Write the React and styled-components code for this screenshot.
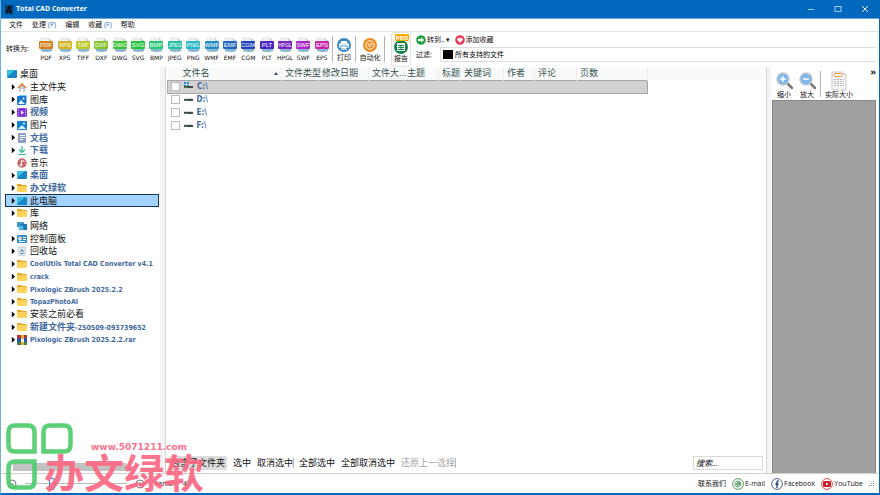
import React from "react";
import styled, { createGlobalStyle } from "styled-components";

const GlobalStyle = createGlobalStyle`
  * {
    box-sizing: border-box;
  }
  body {
    margin: 0;
    font-family: "Open Sans", "Noto Sans CJK SC", sans-serif;
    font-size: 7px;
    line-height: 10px;
    color: #111;
  }
  button,
  input {
    font: inherit;
    color: inherit;
  }
`;

const Window = styled.div`
  position: relative;
  display: flex;
  flex-direction: column;
  height: 100vh;
  overflow: hidden;
  background: #fff;
  border: solid #0067b9;
  border-width: 0 1px 2px;
  border-left-color: #6fb1e3;
`;

const TitleBar = styled.header`
  display: flex;
  align-items: center;
  gap: 3px;
  flex: none;
  height: 19px;
  padding: 0 8px 0 4px;
  background: #0069bd;
  border-bottom: 1px solid #68a9dc;
  color: #fff;
`;

const Title = styled.h1`
  flex: 1;
  margin: 0;
  font-size: 7px;
  font-weight: 700;
`;

const WindowButton = styled.button`
  display: flex;
  width: 10px;
  margin-left: 14px;
  padding: 0;
  border: 0;
  background: none;
`;

const MenuBar = styled.nav`
  display: flex;
  align-items: center;
  gap: 9px;
  flex: none;
  height: 13px;
  padding-left: 8px;
  border-bottom: 1px solid #e4e4e4;
`;

const PlainButton = styled.button`
  flex: none;
  padding: 0;
  border: 0;
  background: none;
  white-space: nowrap;
  color: ${(props) => (props.$muted ? "#a3a3a3" : "inherit")};
`;

const Accel = styled.span`
  color: #3472a8;
`;

const Toolbar = styled.div`
  display: flex;
  flex: none;
  height: 35px;
`;

const ConvertLabel = styled.span`
  flex: none;
  width: 36px;
  padding: 12px 0 0 5px;
  white-space: nowrap;
`;

const Formats = styled.div`
  display: grid;
  grid-template-columns: repeat(16, 1fr);
  flex: none;
  width: 294px;
`;

const ToolButton = styled.button`
  display: flex;
  flex-direction: column;
  align-items: center;
  flex: none;
  width: ${(props) => props.$width || "auto"};
  padding: ${(props) => (props.$framed ? "2px" : "5px")} 0 0;
  border: ${(props) => (props.$framed ? "1px solid #e2e2e2" : "0")};
  border-radius: 3px;
  background: none;
  white-space: nowrap;

  svg {
    flex: none;
    overflow: visible;
  }
`;

const FormatButton = styled(ToolButton)`
  font-family: "DejaVu Sans", sans-serif;
  font-size: 6px;
`;

const Divider = styled.span`
  flex: none;
  width: 1px;
  height: ${(props) => props.$height || "26px"};
  margin: ${(props) => props.$margin || "4px 0 0"};
  background: #b5b5b5;
`;

const ToolbarRight = styled.div`
  display: flex;
  flex-direction: column;
  flex: 1;
  padding: 0 3px 0 5px;
`;

const QuickRow = styled.div`
  display: flex;
  align-items: center;
  gap: 4px;
  height: 15px;
`;

const IconButton = styled(PlainButton)`
  display: flex;
  align-items: center;
  gap: 1px;
`;

const FilterRow = styled.label`
  display: flex;
  align-items: center;
  height: 15px;
`;

const FilterLabel = styled.span`
  width: 24px;
`;

const FilterBox = styled.span`
  display: flex;
  align-items: center;
  gap: 2px;
  flex: 1;
  height: 15px;
  padding-left: 2px;
  border: 1px solid #dedede;
  border-right: 0;
`;

const Swatch = styled.span`
  width: 10px;
  height: 9px;
  background: #000;
`;

const FilterSelect = styled.select`
  flex: 1;
  padding: 0;
  border: 0;
  background: none;
  appearance: none;
  font: inherit;
`;

const Main = styled.main`
  display: flex;
  flex: 1;
  min-height: 0;
  border-bottom: 1px solid #cfcfcf;
`;

const Sidebar = styled.aside`
  display: flex;
  flex-direction: column;
  justify-content: space-between;
  flex: none;
  width: 158px;
`;

const Tree = styled.ul`
  display: flex;
  flex-direction: column;
  height: 278px;
  margin: 1px 0 0;
  padding: 0 0 0 4px;
  list-style: none;
`;

const TreeRow = styled.li`
  display: flex;
  align-items: center;
  gap: 3px;
  flex: 1;
  min-height: 0;
  padding-left: ${(props) => (props.$root ? "2px" : "6px")};
  white-space: nowrap;
  font-size: 9px;
  font-weight: ${(props) => (props.$link ? 600 : 400)};
  color: ${(props) => (props.$link ? "#41699f" : "#111")};
  background: ${(props) => (props.$selected ? "#a3d4ff" : "none")};
  outline: ${(props) => (props.$selected ? "1px solid #16364f" : "none")};
  outline-offset: -1px;

  svg {
    flex: none;
  }
`;

const Arrow = styled.span`
  width: 4px;
  height: 6px;
  margin-right: -1px;
  clip-path: polygon(20% 0, 100% 50%, 20% 100%);
  background: ${(props) => (props.$open ? "#000" : "transparent")};
`;

const Latin = styled.span`
  font-family: "DejaVu Sans Condensed", "DejaVu Sans", sans-serif;
  font-size: ${(props) => (props.$large ? "8px" : "7px")};
  font-weight: 700;
`;

const ScrollTrack = styled.div`
  display: flex;
  align-items: center;
  height: 12px;
  padding: 0 4px 0 8px;
  color: #777;
`;

const ScrollThumb = styled.div`
  width: 113px;
  height: 8px;
  margin: 0 auto 0 2px;
  background: #c2c2c2;
`;

const Splitter = styled.div`
  flex: none;
  width: ${(props) => (props.$thin ? "5px" : "6px")};
  margin: ${(props) => (props.$thin ? "0 1px 0 0" : "0 1px")};
  background: #f3f3f3;
  border: solid #d6d6d6;
  border-width: ${(props) => (props.$thin ? "0 0 0 1px" : "0 1px 0 0")};
`;

const FilePane = styled.section`
  display: flex;
  flex-direction: column;
  flex: 1;
  min-width: 0;
`;

const FileTable = styled.table`
  width: 100%;
  table-layout: fixed;
  border-collapse: collapse;

  th,
  td {
    height: 13px;
    padding: 0 0 0 3px;
    line-height: 12px;
    text-align: left;
    white-space: nowrap;
  }
  th {
    background: #f9fbfb;
    border-right: 1px solid #e9eeee;
    font-size: 9px;
    font-weight: 400;
    color: #35504f;
  }
  th:first-child {
    position: relative;
    padding-left: 15px;
  }
  th:last-child {
    border-right: 0;
  }
`;

const SortMark = styled.span`
  position: absolute;
  top: 5px;
  right: 3px;
  border: solid transparent;
  border-width: 0 2px 3px;
  border-bottom-color: #35478f;
`;

const FileRow = styled.tr`
  td:first-child {
    background: ${(props) => (props.$selected ? "#d2d2d2" : "none")};
    border: ${(props) => (props.$selected ? "1px solid #a6a6a6" : "0")};
  }
`;

const FileLabel = styled.label`
  display: flex;
  align-items: center;
  gap: 4px;
  height: 11px;
  color: #41699f;
`;

const CheckBox = styled.input`
  appearance: none;
  width: 9px;
  height: 9px;
  margin: 0;
  background: #fff;
  border: 1px solid #bcbcbc;
`;

const SelectionBar = styled.div`
  display: flex;
  align-items: center;
  gap: 6px;
  height: 21px;
  margin-top: auto;
  padding: 0 3px 0 2px;
  font-size: 9px;
`;

const ToggleButton = styled(PlainButton)`
  height: 14px;
  padding: 0 2px;
  background: #dcdcdc;
  border-radius: 2px;
`;

const SearchBox = styled.input`
  width: 70px;
  height: 14px;
  margin-left: auto;
  padding: 0 2px;
  border: 1px solid #dadada;
  font-size: 8px;
  font-style: italic;

  &::placeholder {
    color: #111;
  }
`;

const Preview = styled.section`
  display: flex;
  flex-direction: column;
  flex: none;
  width: 107px;
  padding-right: 3px;
`;

const PreviewTools = styled.div`
  display: flex;
  align-items: flex-start;
  height: 33px;
`;

const More = styled(PlainButton)`
  margin: 0 0 0 auto;
  font-size: 9px;
  font-weight: 700;
`;

const PreviewArea = styled.div`
  flex: 1;
  background: #a0a0a0;
  border: 1px solid #858585;
  border-bottom: 0;
`;

const StatusBar = styled.footer`
  display: flex;
  align-items: center;
  flex: none;
  height: 19px;
  padding: 0 4px 0 6px;
`;

const ZoomSlider = styled.input`
  appearance: none;
  width: 102px;
  height: 12px;
  margin: 0 8px;
  background: linear-gradient(#b9b9b9, #b9b9b9) center / 100% 1px no-repeat;

  &::-webkit-slider-thumb {
    appearance: none;
    width: 6px;
    height: 12px;
    background: #e3f1fb;
    border: 1px solid #1f8ad6;
    border-radius: 2px;
  }
`;

const Count = styled.output`
  display: flex;
  gap: 9px;
  margin: 0 auto 0 9px;
`;

const Contacts = styled.div`
  display: flex;
  align-items: center;
  gap: 5px;
`;

const ContactLink = styled.a`
  display: flex;
  align-items: center;
  gap: 1px;
  color: #111;
  text-decoration: none;

  & + & {
    margin-left: 1px;
  }
`;

const Watermark = styled.div`
  position: absolute;
  left: 3px;
  bottom: 1px;
  color: #fb6883;
  opacity: 0.92;
  pointer-events: none;

  svg {
    display: block;
  }
`;

const WatermarkText = styled.div`
  position: absolute;
  left: 40px;
  bottom: -1px;
  display: flex;
  flex-direction: column;
  white-space: nowrap;
  font-size: 40px;
  font-weight: 700;
  line-height: 40px;
`;

const WatermarkSite = styled.span`
  padding-left: 30px;
  align-self: center;
  font-family: "DejaVu Sans", sans-serif;
  font-size: 9px;
  line-height: 12px;
`;

const formats = [
  ["PDF", "#d5811d"],
  ["XPS", "#d3b324"],
  ["TIFF", "#bfc92a"],
  ["DXF", "#83c526"],
  ["DWG", "#3cc432"],
  ["SVG", "#27c53d"],
  ["BMP", "#29c779"],
  ["JPEG", "#27bfa7"],
  ["PNG", "#26b9c6"],
  ["WMF", "#258dc4"],
  ["EMF", "#2367c2"],
  ["CGM", "#223fbe"],
  ["PLT", "#4b26c3"],
  ["HPGL", "#7b25c2"],
  ["SWF", "#aa27c5"],
  ["EPS", "#ca23ae"],
];

const treeItems = [
  { name: "主文件夹", icon: "home" },
  { name: "图库", icon: "gallery" },
  { name: "视频", icon: "video", link: true },
  { name: "图片", icon: "picture" },
  { name: "文档", icon: "document", link: true },
  { name: "下载", icon: "download", link: true },
  { name: "音乐", icon: "music", leaf: true },
  { name: "桌面", icon: "screen", link: true },
  { name: "办文绿软", icon: "folder", link: true },
  { name: "此电脑", icon: "screen", selected: true },
  { name: "库", icon: "folder" },
  { name: "网络", icon: "network", leaf: true },
  { name: "控制面板", icon: "panel" },
  { name: "回收站", icon: "recycle" },
  { latin: "CoolUtils Total CAD Converter v4.1", icon: "folder", link: true },
  { latin: "crack", icon: "folder", link: true },
  { latin: "Pixologic ZBrush 2025.2.2", icon: "folder", link: true },
  { latin: "TopazPhotoAI", icon: "folder", link: true },
  { name: "安装之前必看", icon: "folder" },
  { name: "新建文件夹", latin: "-250509-093739652", icon: "folder", link: true },
  { latin: "Pixologic ZBrush 2025.2.2.rar", icon: "archive", link: true },
];

const columns = [
  ["文件名", 114],
  ["文件类型", 37],
  ["修改日期", 50],
  ["文件大...", 35],
  ["主题", 35],
  ["标题", 22],
  ["关键词", 43],
  ["作者", 31],
  ["评论", 42],
  ["页数", 71],
];

const drives = ["C:\\", "D:\\", "E:\\", "F:\\"];

const treeIcons = {
  home: (
    <>
      <path d="M2 5v5h2V7h2v3h2V5L5 2z" fill="#c3c9ce" />
      <path d="M1 6l4-4 4 4" fill="none" stroke="#e2823a" strokeWidth="1.6" />
    </>
  ),
  gallery: (
    <>
      <rect x="2" width="8" height="8" rx="1" fill="#7cc3ef" />
      <rect y="1" width="9" height="9" rx="1" fill="#1678cd" />
      <path d="M1 9l3-4 4 4z" fill="#e9f6ff" />
      <circle cx="6.500" cy="3.500" r="1" fill="#fff" />
    </>
  ),
  video: (
    <>
      <rect y="1" width="10" height="9" rx="1" fill="#8537d6" />
      <path d="M1.500 1v9M8.500 1v9" stroke="#c49af0" strokeDasharray="1 1" />
      <path d="M4 3.500v4l3-2z" fill="#fff" />
    </>
  ),
  picture: (
    <>
      <rect y="1" width="10" height="9" rx="1" fill="#1481d3" />
      <path d="M1 9l4-4 4 4z" fill="#dff3ff" />
      <circle cx="7" cy="3.500" r="1" fill="#fff" />
    </>
  ),
  document: (
    <>
      <rect x="1" y="0" width="8" height="10" rx="1" fill="#8b9fc4" />
      <path d="M3 2.500h5M3 4.500h5M3 6.500h3" stroke="#fff" />
    </>
  ),
  download: (
    <path d="M5 1v6M2 4.500l3 3 3-3M1 9.500h8" fill="none" stroke="#2eb893" strokeWidth="1.200" />
  ),
  music: (
    <>
      <circle cx="5" cy="5" r="4.700" fill="#cf6668" />
      <path d="M4.500 7V2.500l3 1" fill="none" stroke="#fff" />
      <circle cx="4" cy="7" r="1.200" fill="#fff" />
    </>
  ),
  screen: (
    <>
      <rect y="1" width="10" height="8" rx="1" fill="#1b84c4" />
      <path d="M0 8V2q0-1 1-1h7z" fill="#36bfe0" />
    </>
  ),
  folder: (
    <>
      <path d="M0 2q0-1 1-1h3l1 1h4q1 0 1 1v1H0z" fill="#e9a51f" />
      <rect y="3" width="10" height="6" rx="1" fill="#ffd35c" />
    </>
  ),
  network: (
    <>
      <rect y="1" width="7" height="5" fill="#3d9bd1" />
      <rect x="3" y="3" width="7" height="6" fill="#1f76b5" />
      <circle cx="4" cy="7" r="2.500" fill="#54b5dd" />
    </>
  ),
  panel: (
    <>
      <rect y="1" width="10" height="8" rx="1" fill="#2c8fd6" />
      <circle cx="3" cy="4.500" r="2" fill="#d8effd" />
      <path d="M6 3.500h3M6 5.500h3M2 7.500h6" stroke="#fff" />
      <path d="M3 4.500V2.500a2 2 0 0 1 2 2z" fill="#f3a43a" />
    </>
  ),
  recycle: (
    <>
      <path d="M1 1h8l-1 9H2z" fill="#dfe5e9" stroke="#aab4bb" strokeWidth=".5" />
      <path d="M3.500 6L5 3.500 6.500 6M3.500 7.500h3" fill="none" stroke="#3b87c9" />
    </>
  ),
  archive: (
    <>
      <rect width="10" height="4" fill="#b92e3a" />
      <rect y="3" width="10" height="4" fill="#2853a6" />
      <rect y="7" width="10" height="3" fill="#38873f" />
      <rect x="4" width="3" height="10" fill="#e7ad3d" />
      <rect x="4" y="4" width="3" height="3" fill="#fff" />
    </>
  ),
};

const TreeIcon = ({ name }) => (
  <svg width="10" height="10" viewBox="0 0 10 10" aria-hidden="true">
    {treeIcons[name]}
  </svg>
);

const FormatIcon = ({ name, color }) => (
  <svg width="16" height="16" viewBox="0 0 16 16" aria-hidden="true">
    <path d="M3 1h8l3 3v10H3z" fill="#edf1f4" stroke="#cdd4d9" strokeWidth=".5" />
    <path d="M11 1v3h3" fill="#c6ced4" />
    <path d="M3 11h11v3q-5 2-11 0z" fill="#8bb6cf" />
    <rect x="1" y="4" width="14" height="8" rx="1" fill={color} />
    <text
      x="8"
      y="10"
      textAnchor="middle"
      fontSize={name.length > 3 ? 5 : 6}
      fontFamily="Liberation Sans, sans-serif"
      fill="#fff"
    >
      {name}
    </text>
  </svg>
);

const PrintIcon = () => (
  <svg width="16" height="16" viewBox="0 0 16 16" aria-hidden="true">
    <circle cx="8" cy="8" r="7" fill="#3c86c4" />
    <path d="M5 4h6v3H5zM5 9h6v4H5z" fill="#fff" />
    <rect x="3" y="6" width="10" height="5" rx="1" fill="#dcecf8" />
    <path d="M5 9h6v3H5z" fill="#fff" stroke="#3c86c4" strokeWidth=".7" />
  </svg>
);

const AutomateIcon = () => (
  <svg width="16" height="16" viewBox="0 0 16 16" aria-hidden="true">
    <circle cx="8" cy="8" r="7" fill="#f08a1d" />
    <circle cx="8" cy="8" r="4.200" fill="none" stroke="#fff" />
    <path d="M5.500 7h5M6 8l2 2 2-2" fill="none" stroke="#fff" strokeWidth=".9" />
  </svg>
);

const ReportIcon = () => (
  <svg width="16" height="19" viewBox="0 0 16 19" aria-hidden="true">
    <circle cx="8" cy="12" r="7" fill="#11844b" />
    <rect x="4" y="8" width="8" height="8" rx="1" fill="#fff" />
    <path d="M5 10.500h6M5 12.500h6M5 14.500h6M8 10v5" stroke="#11844b" />
    <rect x="2" y="-1" width="14" height="7" rx="1" fill="#fca90a" />
    <text x="9" y="5" fontSize="6" fontWeight="700" textAnchor="middle" fill="#fff">
      PRO
    </text>
  </svg>
);

const GoIcon = () => (
  <svg width="10" height="10" viewBox="0 0 10 10" aria-hidden="true">
    <circle cx="5" cy="5" r="4.800" fill="#26a044" />
    <path d="M2 4h3V2.500L8.200 5 5 7.500V6H2z" fill="#fff" />
  </svg>
);

const HeartIcon = () => (
  <svg width="10" height="10" viewBox="0 0 10 10" aria-hidden="true">
    <circle cx="5" cy="5" r="4.800" fill="#e83a56" />
    <path d="M5 8L2.300 5C1.500 3 4 1.800 5 3.500 6 1.800 8.500 3 7.700 5z" fill="#fff" />
  </svg>
);

const ZoomIcon = ({ plus }) => (
  <svg width="17" height="18" viewBox="0 0 17 18" aria-hidden="true">
    <path d="M11 11l5 5" stroke="#777" strokeWidth="2.500" strokeLinecap="round" />
    <circle cx="7" cy="7" r="6" fill="#7fb7ec" stroke="#c3c8cc" strokeWidth="1.500" />
    <path d={plus ? "M4 7h6M7 4v6" : "M4 7h6"} stroke="#fff" strokeWidth="1.500" />
  </svg>
);

const ActualSizeIcon = () => (
  <svg width="16" height="18" viewBox="0 0 16 18" aria-hidden="true">
    <path d="M1 0h11l3 3v15H1z" fill="#f5f5f5" stroke="#b9b9b9" strokeWidth=".7" />
    <path d="M12 0v3h3" fill="#d2d2d2" />
    <rect x="3" y="1.500" width="8" height="3" rx="1" fill="#fff" stroke="#e69a42" />
    <path d="M3 7.500h10M3 9.500h10M3 11.500h10M3 13.500h10" stroke="#b5b5b5" strokeDasharray="2 1" />
  </svg>
);

const DriveIcon = ({ system }) => (
  <svg width="9" height="9" viewBox="0 0 9 9" aria-hidden="true">
    <path d="M1 3h7l1 2H0z" fill="#d5d7d9" />
    <rect y="4" width="9" height="2" fill="#44494c" />
    <rect x="1" y="5" width="2" height="1" fill="#3daf57" />
    {system && <path d="M0 0h2v2H0zM3 0h2v2H3zM0 3h2v1H0zM3 3h2v1H3z" fill="#188ed8" />}
  </svg>
);

const RoundSign = ({ plus }) => (
  <svg width="10" height="10" viewBox="0 0 10 10" aria-hidden="true">
    <circle cx="5" cy="5" r="4" fill="none" stroke="#555" strokeWidth=".8" />
    <path d={plus ? "M3 5h4M5 3v4" : "M3 5h4"} stroke="#555" strokeWidth=".8" />
  </svg>
);

const ContactIcon = ({ kind }) => {
  const color = { mail: "#27813c", facebook: "#213a75", youtube: "#c71f26" }[kind];
  return (
    <svg width="12" height="12" viewBox="0 0 12 12" aria-hidden="true">
      <circle cx="6" cy="6" r="5.400" fill="#fff" stroke={color} strokeWidth=".8" />
      {kind === "mail" && (
        <>
          <circle cx="6" cy="6" r="1.300" fill="none" stroke={color} />
          <path d="M7.500 4v3q1.500 1 1.500-1a3 3 0 1 0-1.500 2.600" fill="none" stroke={color} strokeWidth=".8" />
        </>
      )}
      {kind === "facebook" && (
        <path d="M7.800 3H7Q6 3 6 4.200V10M4.300 6h3.200" fill="none" stroke={color} strokeWidth="1.300" />
      )}
      {kind === "youtube" && (
        <>
          <rect x="2" y="3" width="8" height="6" rx="1.500" fill={color} />
          <path d="M5 4.500v3L7.500 6z" fill="#fff" />
        </>
      )}
    </svg>
  );
};

const WatermarkLogo = () => (
  <svg width="70" height="70" viewBox="0 0 70 70" aria-hidden="true">
    <g fill="none" stroke="#4fcb6c" strokeWidth="4.500">
      <path d="M11 3.500h13q6.500 0 6.500 6.500v19.500H11q-6.500 0-6.500-6.500V10q0-6.500 6.500-6.500z" />
      <path d="M39.500 29.500V10q0-6.500 6.500-6.500h14q6.500 0 6.500 6.500v13q0 6.500-6.500 6.500z" />
      <path d="M11 39.500h19.500V59q0 6.500-6.500 6.500H11q-6.500 0-6.500-6.500V46q0-6.500 6.500-6.500z" />
    </g>
  </svg>
);

const FolderTree = () => (
  <Tree>
    <TreeRow $root>
      <TreeIcon name="screen" />
      桌面
    </TreeRow>
    {treeItems.map((item, index) => (
      <TreeRow key={index} $link={item.link} $selected={item.selected}>
        <Arrow $open={!item.leaf} />
        <TreeIcon name={item.icon} />
        <span>
          {item.name}
          {item.latin && <Latin>{item.latin}</Latin>}
        </span>
      </TreeRow>
    ))}
  </Tree>
);

const FileList = () => (
  <FileTable>
    <colgroup>
      {columns.map(([name, width]) => (
        <col key={name} width={width} />
      ))}
      <col />
    </colgroup>
    <thead>
      <tr>
        {columns.map(([name], index) => (
          <th key={name}>
            {name}
            {index === 0 && <SortMark />}
          </th>
        ))}
        <th />
      </tr>
    </thead>
    <tbody>
      {drives.map((drive, index) => (
        <FileRow key={drive} $selected={index === 0}>
          <td colSpan={columns.length}>
            <FileLabel>
              <CheckBox type="checkbox" />
              <DriveIcon system={index === 0} />
              <Latin $large>{drive}</Latin>
            </FileLabel>
          </td>
          <td />
        </FileRow>
      ))}
    </tbody>
  </FileTable>
);

const App = () => (
  <>
    <GlobalStyle />
    <Window>
      <TitleBar>
        <svg width="8" height="9" viewBox="0 0 8 9" aria-hidden="true">
          <rect width="8" height="9" fill="#123a63" />
          <path d="M1 8l3-6 2 6M2 6h4M5 1v3" fill="none" stroke="#0a0f16" strokeWidth="1.200" />
        </svg>
        <Title>Total CAD Converter</Title>
        <WindowButton aria-label="最小化">
          <svg width="8" height="8" viewBox="0 0 8 8">
            <path d="M1 4.500h6" stroke="#cfe4f5" strokeWidth=".8" />
          </svg>
        </WindowButton>
        <WindowButton aria-label="最大化">
          <svg width="8" height="8" viewBox="0 0 8 8">
            <rect x="1" y="1.500" width="6" height="5" fill="none" stroke="#cfe4f5" strokeWidth=".8" />
          </svg>
        </WindowButton>
        <WindowButton aria-label="关闭">
          <svg width="8" height="8" viewBox="0 0 8 8">
            <path d="M1 1l6 6M7 1L1 7" stroke="#fff" />
          </svg>
        </WindowButton>
      </TitleBar>

      <MenuBar>
        <PlainButton>文件</PlainButton>
        <PlainButton>
          处理 <Accel>(P)</Accel>
        </PlainButton>
        <PlainButton>编辑</PlainButton>
        <PlainButton>
          收藏 <Accel>(F)</Accel>
        </PlainButton>
        <PlainButton>帮助</PlainButton>
      </MenuBar>

      <Toolbar>
        <ConvertLabel>转换为:</ConvertLabel>
        <Formats>
          {formats.map(([name, color]) => (
            <FormatButton key={name}>
              <FormatIcon name={name} color={color} />
              {name}
            </FormatButton>
          ))}
        </Formats>
        <Divider $margin="4px 0 0 1px" />
        <ToolButton $width="22px">
          <PrintIcon />
          打印
        </ToolButton>
        <Divider />
        <ToolButton $width="28px">
          <AutomateIcon />
          自动化
        </ToolButton>
        <Divider $margin="4px 6px 0 0" />
        <ToolButton $width="20px" $framed>
          <ReportIcon />
          报告
        </ToolButton>
        <ToolbarRight>
          <QuickRow>
            <IconButton>
              <GoIcon />
              转到.. ▾
            </IconButton>
            <IconButton>
              <HeartIcon />
              添加收藏
            </IconButton>
          </QuickRow>
          <FilterRow>
            <FilterLabel>过滤:</FilterLabel>
            <FilterBox>
              <Swatch />
              <FilterSelect>
                <option>所有支持的文件</option>
              </FilterSelect>
            </FilterBox>
          </FilterRow>
        </ToolbarRight>
      </Toolbar>

      <Main>
        <Sidebar>
          <FolderTree />
          <ScrollTrack>
            ‹<ScrollThumb />›
          </ScrollTrack>
        </Sidebar>
        <Splitter />
        <FilePane>
          <FileList />
          <SelectionBar>
            <ToggleButton>包含子文件夹</ToggleButton>
            <PlainButton>选中</PlainButton>
            <PlainButton>取消选中</PlainButton>
            <Divider $height="10px" $margin="0 -1px 0 -6px" />
            <PlainButton>全部选中</PlainButton>
            <PlainButton>全部取消选中</PlainButton>
            <PlainButton $muted>还原上一选择</PlainButton>
            <Divider $height="10px" $margin="0 0 0 -6px" />
            <SearchBox placeholder="搜索..." aria-label="搜索" />
          </SelectionBar>
        </FilePane>
        <Splitter $thin />
        <Preview>
          <PreviewTools>
            <ToolButton $width="24px">
              <ZoomIcon plus />
              缩小
            </ToolButton>
            <ToolButton $width="22px">
              <ZoomIcon />
              放大
            </ToolButton>
            <Divider $margin="4px 2px 0" />
            <ToolButton $width="32px">
              <ActualSizeIcon />
              实际大小
            </ToolButton>
            <More>»</More>
          </PreviewTools>
          <PreviewArea />
        </Preview>
      </Main>

      <StatusBar>
        <RoundSign />
        <ZoomSlider type="range" defaultValue="25" aria-label="缩放" />
        <RoundSign plus />
        <Count>
          <span>Items:</span>
          <span>4</span>
        </Count>
        <Contacts>
          <ContactLink href="#contact">联系我们</ContactLink>
          <ContactLink href="#mail">
            <ContactIcon kind="mail" />
            E-mail
          </ContactLink>
          <ContactLink href="#facebook">
            <ContactIcon kind="facebook" />
            Facebook
          </ContactLink>
          <ContactLink href="#youtube">
            <ContactIcon kind="youtube" />
            YouTube
          </ContactLink>
          <svg width="7" height="7" viewBox="0 0 7 7" aria-hidden="true">
            <path d="M5 1h1v1H5zM3 3h1v1H3zM5 3h1v1H5zM1 5h1v1H1zM3 5h1v1H3zM5 5h1v1H5z" fill="#888" />
          </svg>
        </Contacts>
      </StatusBar>

      <Watermark>
        <WatermarkLogo />
        <WatermarkText>
          <WatermarkSite>www.5071211.com</WatermarkSite>
          办文绿软
        </WatermarkText>
      </Watermark>
    </Window>
  </>
);

export default App;
